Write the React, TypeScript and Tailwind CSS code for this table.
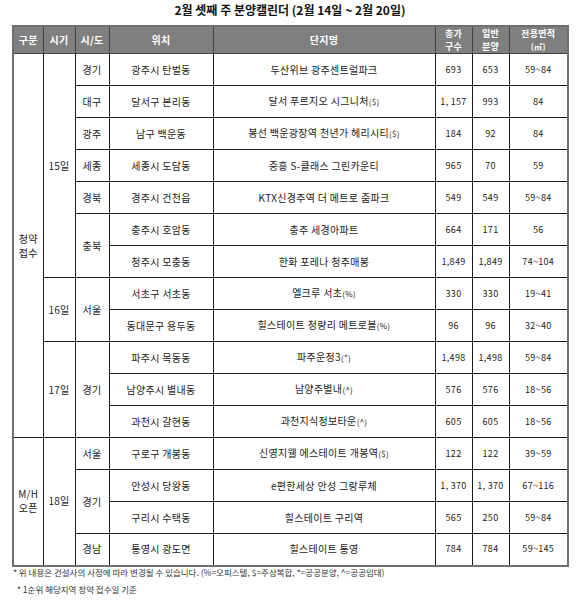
import React from "react";

type Row = {
  gubun?: { text: React.ReactNode; span: number };
  date?: { text: string; span: number };
  region?: { text: string; span: number };
  loc: string;
  name: string;
  suffix?: string;
  total: string;
  general: string;
  area: string;
};

const rows: Row[] = [
  { gubun: { text: <>청약<br />접수</>, span: 12 }, date: { text: "15일", span: 7 }, region: { text: "경기", span: 1 }, loc: "광주시 탄벌동", name: "두산위브 광주센트럴파크", total: "693", general: "653", area: "59~84" },
  { region: { text: "대구", span: 1 }, loc: "달서구 본리동", name: "달서 푸르지오 시그니처", suffix: "($)", total: "1, 157", general: "993", area: "84" },
  { region: { text: "광주", span: 1 }, loc: "남구 백운동", name: "봉선 백운광장역 천년가 헤리시티", suffix: "($)", total: "184", general: "92", area: "84" },
  { region: { text: "세종", span: 1 }, loc: "세종시 도담동", name: "중흥 S-클래스 그린카운티", total: "965", general: "70", area: "59" },
  { region: { text: "경북", span: 1 }, loc: "경주시 건천읍", name: "KTX신경주역 더 메트로 줌파크", total: "549", general: "549", area: "59~84" },
  { region: { text: "충북", span: 2 }, loc: "충주시 호암동", name: "충주 세경아파트", total: "664", general: "171", area: "56" },
  { loc: "청주시 모충동", name: "한화 포레나 청주매봉", total: "1,849", general: "1,849", area: "74~104" },
  { date: { text: "16일", span: 2 }, region: { text: "서울", span: 2 }, loc: "서초구 서초동", name: "엘크루 서초", suffix: "(%)", total: "330", general: "330", area: "19~41" },
  { loc: "동대문구 용두동", name: "힐스테이트 청량리 메트로블", suffix: "(%)", total: "96", general: "96", area: "32~40" },
  { date: { text: "17일", span: 3 }, region: { text: "경기", span: 3 }, loc: "파주시 목동동", name: "파주운정3", suffix: "(*)", total: "1,498", general: "1,498", area: "59~84" },
  { loc: "남양주시 별내동", name: "남양주별내", suffix: "(^)", total: "576", general: "576", area: "18~56" },
  { loc: "과천시 갈현동", name: "과천지식정보타운", suffix: "(^)", total: "605", general: "605", area: "18~56" },
  { gubun: { text: <>M/H<br />오픈</>, span: 4 }, date: { text: "18일", span: 4 }, region: { text: "서울", span: 1 }, loc: "구로구 개봉동", name: "신영지웰 에스테이트 개봉역", suffix: "($)", total: "122", general: "122", area: "39~59" },
  { region: { text: "경기", span: 2 }, loc: "안성시 당왕동", name: "e편한세상 안성 그랑루체", total: "1, 370", general: "1, 370", area: "67~116" },
  { loc: "구리시 수택동", name: "힐스테이트 구리역", total: "565", general: "250", area: "59~84" },
  { region: { text: "경남", span: 1 }, loc: "통영시 광도면", name: "힐스테이트 통영", total: "784", general: "784", area: "59~145" },
];

const td = "border border-[#1a1a1a] text-center align-middle p-0";
const th = "border border-[#404040] bg-[#7f7f7f] text-white font-bold text-center align-middle p-0 leading-[12px]";
const th2 = th + " text-[9px] leading-[13px]";

export default function App() {
  return (
    <div className="w-[580px] h-[600px] bg-white text-[#222] font-['Noto_Sans_CJK_KR','Noto_Sans',sans-serif]">
      <div className="h-[25px] pt-[1px] text-center text-[12px] font-bold leading-[18px] text-[#111]">
        2월 셋째 주 분양캘린더 (2월 14일 ~ 2월 20일)
      </div>
      <table className="ml-[12px] w-[555px] table-fixed border-collapse border-2 border-[#6f6f6f] text-[10px] leading-[14px] tracking-[0.3px]">
        <colgroup>
          <col className="w-[30px]" />
          <col className="w-[32px]" />
          <col className="w-[34px]" />
          <col className="w-[104px]" />
          <col className="w-[222px]" />
          <col className="w-[37px]" />
          <col className="w-[37px]" />
          <col className="w-[59px]" />
        </colgroup>
        <thead>
          <tr className="h-[26px]">
            <th className={th}>구분</th>
            <th className={th}>시기</th>
            <th className={th}>시/도</th>
            <th className={th}>위치</th>
            <th className={th}>단지명</th>
            <th className={th2}>총가<br />구수</th>
            <th className={th2}>일반<br />분양</th>
            <th className={th2}>전용면적<br /><span className="text-[8px]">(㎡)</span></th>
          </tr>
        </thead>
        <tbody>
          {rows.map((r, i) => (
            <tr key={i} className="h-[32px]">
              {r.gubun && <td rowSpan={r.gubun.span} className={td}>{r.gubun.text}</td>}
              {r.date && <td rowSpan={r.date.span} className={td}>{r.date.text}</td>}
              {r.region && <td rowSpan={r.region.span} className={td}>{r.region.text}</td>}
              <td className={td}>{r.loc}</td>
              <td className={td}>
                {r.name}
                {r.suffix && <span className="text-[8px]">{r.suffix}</span>}
              </td>
              <td className={td + " text-[9px]"}>{r.total}</td>
              <td className={td + " text-[9px]"}>{r.general}</td>
              <td className={td + " text-[9px]"}>{r.area}</td>
            </tr>
          ))}
        </tbody>
      </table>
      <div className="-mt-[2px] pl-[13px] text-[8.5px] leading-[15px] text-[#333]">
        <p>* 위 내용은 건설사의 사정에 따라 변경될 수 있습니다. (%=오피스텔, $=주상복합, *=공공분양, ^=공공임대)</p>
        <p className="pl-[4px] mt-[2px]">* 1순위 해당지역 청약 접수일 기준</p>
      </div>
    </div>
  );
}
